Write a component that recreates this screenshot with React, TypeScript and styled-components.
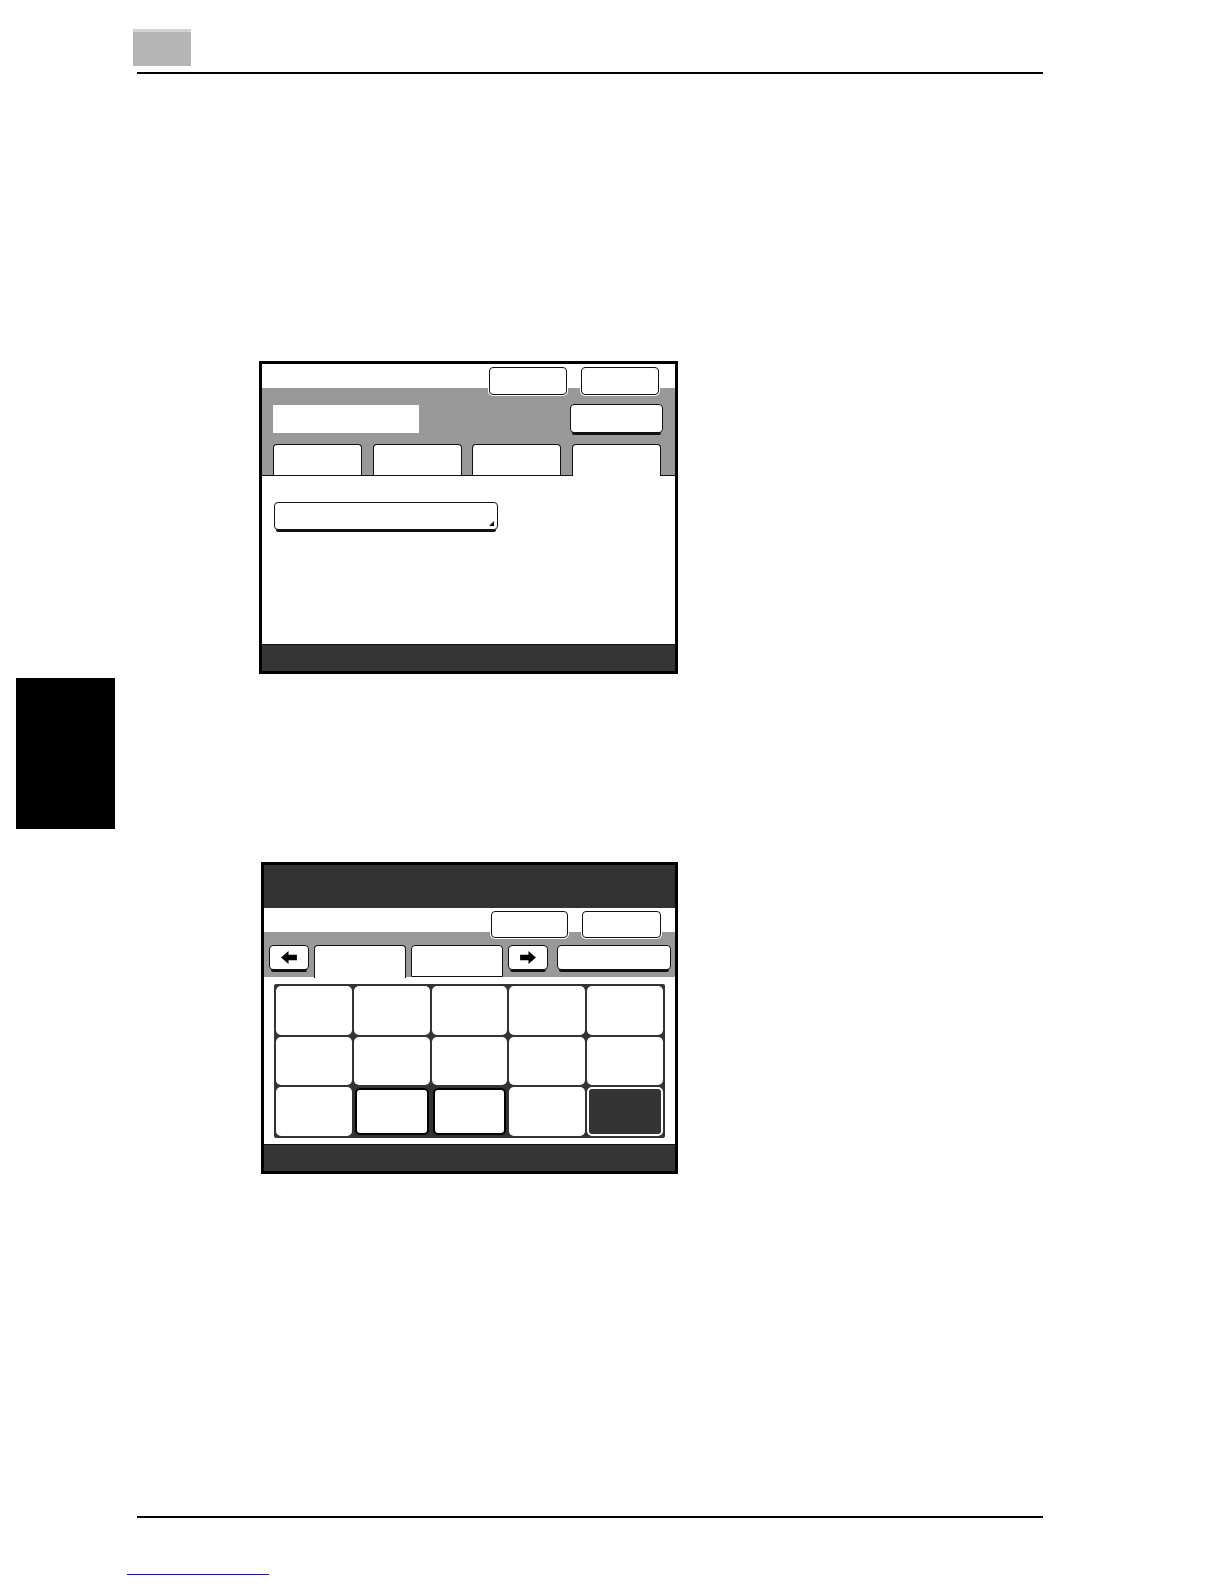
import styled, { createGlobalStyle, css } from 'styled-components';

const GlobalStyle = createGlobalStyle`
    html, body {
        margin: 0;
        padding: 0;
        background: #fff;
        font-family: "Liberation Sans", Arial, sans-serif;
    }
`;

const Page = styled.div`
    width: 1224px;
    height: 1584px;
    overflow: hidden;
    background: #fff;
`;

const Header = styled.header`
    display: flex;
    flex-direction: column;
    padding: 29px 0 0 133px;
`;

const ChapterTab = styled.div`
    width: 58px;
    height: 37px;
    background: linear-gradient(to bottom, #d2d2d2 0 3px, #b5b5b5 3px);
`;

const Rule = styled.div<{ $left: number; $top?: number }>`
    width: 906px;
    height: 2px;
    background: #000;
    margin-left: ${({ $left }) => $left}px;
    margin-top: ${({ $top }) => $top ?? 0}px;
`;

const Body = styled.main`
    display: flex;
    height: 1442px;
`;

const Side = styled.aside`
    width: 115px;
    padding: 604px 0 0 16px;
    box-sizing: border-box;
    flex-shrink: 0;
`;

const SideTab = styled.div`
    width: 99px;
    height: 151px;
    background: #000;
`;

const Main = styled.section`
    display: flex;
    flex-direction: column;
    align-items: flex-start;
    padding: 287px 0 0 144px;
`;

const Screen = styled.div<{ $width: number; $height: number; $gap?: number }>`
    display: flex;
    flex-direction: column;
    box-sizing: border-box;
    width: ${({ $width }) => $width}px;
    height: ${({ $height }) => $height}px;
    border: 3px solid #000;
    background: #fff;
    margin-top: ${({ $gap }) => $gap ?? 0}px;
    margin-left: ${({ $gap }) => ($gap ? 2 : 0)}px;
`;

const TitleBar = styled.div`
    height: 43px;
    background: #333;
    flex-shrink: 0;
`;

const ControlBand = styled.div<{ $height: number; $line?: boolean }>`
    display: flex;
    flex-direction: column;
    flex-shrink: 0;
    box-sizing: border-box;
    height: ${({ $height }) => $height}px;
    padding-top: 3px;
    background: linear-gradient(to bottom, #fff 0 24px, #999 24px);
    ${({ $line }) => $line && css`
        border-bottom: 1px solid #111;
    `}
`;

const TopRow = styled.div<{ $right: number }>`
    display: flex;
    justify-content: flex-end;
    gap: 14px;
    padding-right: ${({ $right }) => $right}px;
`;

const Key = styled.div<{ $w: number; $h: number; $shadow?: boolean; $lead?: number }>`
    position: relative;
    box-sizing: border-box;
    width: ${({ $w }) => $w}px;
    height: ${({ $h }) => $h}px;
    margin-left: ${({ $lead }) => $lead ?? 0}px;
    background: #fff;
    border: 1.5px solid #111;
    border-radius: 4px;
    display: flex;
    align-items: center;
    justify-content: center;
    flex-shrink: 0;
    box-shadow: ${({ $shadow }) => ($shadow ? '0 4px 0 -2px #111' : '0 0 0 1px #fff')};
`;

const MenuKey = styled(Key)`
    &::after {
        content: '';
        position: absolute;
        right: 3px;
        bottom: 3px;
        border-style: solid;
        border-width: 0 0 5px 5px;
        border-color: transparent transparent #111 transparent;
    }
`;

const MidRow = styled.div`
    display: flex;
    justify-content: space-between;
    align-items: flex-start;
    margin-top: 9px;
    padding: 0 12px 0 11px;
`;

const Display = styled.div`
    width: 146px;
    height: 28px;
    margin-top: 1px;
    background: #fff;
`;

const TabRow = styled.div<{ $gap: number; $top: number }>`
    display: flex;
    align-items: stretch;
    gap: ${({ $gap }) => $gap}px;
    margin-top: ${({ $top }) => $top}px;
    flex: 1;
    padding-left: 11px;
`;

const NavRow = styled.div`
    display: flex;
    align-items: flex-start;
    margin-top: 7px;
    flex: 1;
    padding-left: 5px;
    gap: 5px;
`;

const Tab = styled.div<{ $w: number; $active?: boolean; $closed?: boolean }>`
    box-sizing: border-box;
    width: ${({ $w }) => $w}px;
    align-self: stretch;
    background: #fff;
    border: 1.5px solid #111;
    border-bottom: ${({ $closed }) => ($closed ? '1.5px solid #111' : 'none')};
    border-radius: 4px 4px 0 0;
    flex-shrink: 0;
    ${({ $active }) => $active && css`
        margin-bottom: -1px;
    `}
`;

const Content = styled.div`
    flex: 1;
    padding: 26px 0 0 12px;
`;

const GridArea = styled.div`
    flex: 1;
    padding: 7px 0 0 10px;
`;

const KeyGrid = styled.div`
    display: grid;
    grid-template-columns: repeat(5, 1fr);
    grid-template-rows: repeat(3, 1fr);
    gap: 2px;
    padding: 2px;
    width: 391px;
    height: 154px;
    box-sizing: border-box;
    background: #333;
    border-radius: 2px;
`;

type CellKind = 'plain' | 'pressed' | 'dark';

const Cell = styled.div<{ $kind: CellKind }>`
    box-sizing: border-box;
    border-radius: 5px;
    background: #fff;
    ${({ $kind }) => $kind === 'pressed' && css`
        border: 2.5px solid #000;
        margin: 1px;
    `}
    ${({ $kind }) => $kind === 'dark' && css`
        background: #333;
        border: 2.5px solid #fff;
    `}
`;

const StatusBar = styled.div`
    height: 27px;
    flex-shrink: 0;
    background: #353535;
    border-top: 1px solid #111;
    box-sizing: border-box;
`;

const Footer = styled.footer`
    display: flex;
    flex-direction: column;
    align-items: flex-start;
`;

const PageLink = styled.a`
    display: block;
    width: 142px;
    height: 0;
    margin: 56px 0 0 127px;
    border-bottom: 1.5px solid #1c1c8a;
`;

const ArrowSvg = styled.svg<{ $flip?: boolean }>`
    width: 16px;
    height: 13px;
    ${({ $flip }) => $flip && css`
        transform: scaleX(-1);
    `}
`;

function Arrow({ dir }: { dir: 'left' | 'right' }) {
    return (
        <ArrowSvg viewBox="0 0 17 14" $flip={dir === 'right'}>
            <path d="M0 7 L8 0 V4 H17 V10 H8 V14 Z" fill="#000" />
        </ArrowSvg>
    );
}

const cells: CellKind[] = [
    'plain', 'plain', 'plain', 'plain', 'plain',
    'plain', 'plain', 'plain', 'plain', 'plain',
    'plain', 'pressed', 'pressed', 'plain', 'dark',
];

export default function App() {
    return (
        <Page>
            <GlobalStyle />
            <Header>
                <ChapterTab />
                <Rule $left={4} $top={6} />
            </Header>
            <Body>
                <Side>
                    <SideTab />
                </Side>
                <Main>
                    <Screen $width={419} $height={313}>
                        <ControlBand $height={112} $line>
                            <TopRow $right={16}>
                                <Key $w={78} $h={28} />
                                <Key $w={78} $h={28} />
                            </TopRow>
                            <MidRow>
                                <Display />
                                <Key $w={93} $h={29} $shadow />
                            </MidRow>
                            <TabRow $gap={10.5} $top={11}>
                                <Tab $w={89} />
                                <Tab $w={89} />
                                <Tab $w={89} />
                                <Tab $w={89} $active />
                            </TabRow>
                        </ControlBand>
                        <Content>
                            <MenuKey $w={224} $h={28} $shadow />
                        </Content>
                        <StatusBar />
                    </Screen>

                    <Screen $width={417} $height={312} $gap={188}>
                        <TitleBar />
                        <ControlBand $height={69}>
                            <TopRow $right={14}>
                                <Key $w={77} $h={27} />
                                <Key $w={79} $h={27} />
                            </TopRow>
                            <NavRow>
                                <Key $w={40} $h={25} $shadow>
                                    <Arrow dir="left" />
                                </Key>
                                <Tab $w={92} $active />
                                <Tab $w={92} $closed />
                                <Key $w={40} $h={25} $shadow>
                                    <Arrow dir="right" />
                                </Key>
                                <Key $w={114} $h={25} $shadow $lead={4} />
                            </NavRow>
                        </ControlBand>
                        <GridArea>
                            <KeyGrid>
                                {cells.map((kind, i) => (
                                    <Cell key={i} $kind={kind} />
                                ))}
                            </KeyGrid>
                        </GridArea>
                        <StatusBar />
                    </Screen>
                </Main>
            </Body>
            <Footer>
                <Rule $left={137} />
                <PageLink href="#" aria-label="page link" />
            </Footer>
        </Page>
    );
}
